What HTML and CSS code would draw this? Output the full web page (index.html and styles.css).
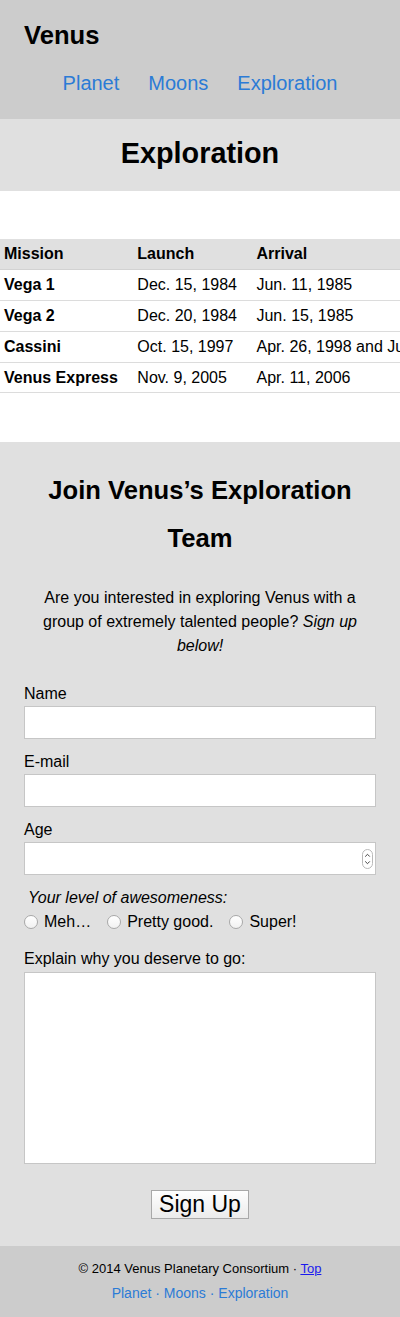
FILE: index.html
```html
<!DOCTYPE html>
<html lang="en">
<head>
<meta charset="utf-8">
<title>Venus — Exploration</title>
<link rel="stylesheet" href="styles.css">
</head>
<body>
<header class="site-header">
  <div class="brand">Venus</div>
  <nav class="main-nav">
    <a href="#">Planet</a>
    <a href="#">Moons</a>
    <a href="#">Exploration</a>
  </nav>
</header>
<main>
  <section class="page-title">
    <h1>Exploration</h1>
  </section>
  <div class="table-wrap">
    <table class="missions">
      <thead>
        <tr><th>Mission</th><th>Launch</th><th>Arrival</th></tr>
      </thead>
      <tbody>
        <tr><th>Vega 1</th><td>Dec. 15, 1984</td><td>Jun. 11, 1985</td></tr>
        <tr><th>Vega 2</th><td>Dec. 20, 1984</td><td>Jun. 15, 1985</td></tr>
        <tr><th>Cassini</th><td>Oct. 15, 1997</td><td>Apr. 26, 1998 and Jun. 24, 1999</td></tr>
        <tr><th>Venus Express</th><td>Nov. 9, 2005</td><td>Apr. 11, 2006</td></tr>
      </tbody>
    </table>
  </div>
  <section class="join">
    <h2>Join Venus’s Exploration Team</h2>
    <p class="intro">Are you interested in exploring Venus with a group of extremely talented people? <em>Sign up below!</em></p>
    <form class="join-form">
      <label class="field-label" for="name">Name</label>
      <input class="text-input" id="name" type="text">
      <label class="field-label" for="email">E-mail</label>
      <input class="text-input" id="email" type="text">
      <label class="field-label" for="age">Age</label>
      <div class="num-wrap">
        <input class="text-input" id="age" type="text" inputmode="numeric">
        <span class="spinner">
          <svg width="11" height="20" viewBox="0 0 11 20">
            <rect x="0.5" y="0.5" width="10" height="19" rx="5" fill="#fff" stroke="#b9b9b9"/>
            <path d="M3.2 7.6 L5.5 5.3 L7.8 7.6" fill="none" stroke="#444" stroke-width="1"/>
            <path d="M3.2 12.4 L5.5 14.7 L7.8 12.4" fill="none" stroke="#444" stroke-width="1"/>
          </svg>
        </span>
      </div>
      <fieldset class="awesome">
        <legend>Your level of awesomeness:</legend>
        <div class="radios">
          <label class="radio"><input type="radio" name="level"><span>Meh…</span></label>
          <label class="radio"><input type="radio" name="level"><span>Pretty good.</span></label>
          <label class="radio"><input type="radio" name="level"><span>Super!</span></label>
        </div>
      </fieldset>
      <label class="field-label" for="why">Explain why you deserve to go:</label>
      <textarea class="text-area" id="why"></textarea>
      <div class="actions">
        <button type="button" class="submit">Sign Up</button>
      </div>
    </form>
  </section>
</main>
<footer class="site-footer">
  <p class="copy">© 2014 Venus Planetary Consortium · <a class="top-link" href="#">Top</a></p>
  <p class="foot-nav"><a href="#">Planet</a> · <a href="#">Moons</a> · <a href="#">Exploration</a></p>
</footer>
</body>
</html>
```

FILE: styles.css
```css
* {
  box-sizing: border-box;
}

html, body {
  margin: 0;
  padding: 0;
}

body {
  font-family: "Liberation Sans", Arial, Helvetica, sans-serif;
  font-size: 16px;
  color: #000;
  background: #fff;
}

a {
  color: #2b7bd6;
  text-decoration: none;
}

/* Header */
.site-header {
  background: #cccccc;
  padding: 19px 24px 21px;
}

.brand {
  font-size: 25.6px;
  font-weight: bold;
  line-height: 32px;
}

.main-nav {
  margin-top: 17px;
  display: flex;
  justify-content: center;
  gap: 29px;
  font-size: 20px;
  line-height: 30px;
}

/* Page title */
.page-title {
  background: #e0e0e0;
  padding: 16px 0 20px;
  text-align: center;
}

.page-title h1 {
  margin: 0;
  font-size: 28.8px;
  line-height: 36px;
}

/* Table */
.table-wrap {
  margin: 48px 0 49px;
  overflow: hidden;
  width: 100%;
}

.missions {
  border-collapse: collapse;
  white-space: nowrap;
  min-width: 100%;
}

.missions th,
.missions td {
  height: 30.8px;
  padding: 0 15.5px 0 4px;
  text-align: left;
  vertical-align: middle;
  border-bottom: 1px solid #dcdcdc;
  line-height: 20px;
}

.missions thead th {
  background: #e0e0e0;
  border-bottom-color: #d2d2d2;
}

.missions td {
  font-weight: normal;
}

/* Join section */
.join {
  background: #e0e0e0;
  padding: 24px 24px 27px;
}

.join h2 {
  margin: 0;
  text-align: center;
  font-size: 25.6px;
  line-height: 48px;
}

.intro {
  margin: 24px 0;
  text-align: center;
  line-height: 24px;
}

.join-form {
  display: flex;
  flex-direction: column;
}

.field-label {
  display: block;
  line-height: 24px;
}

.text-input {
  display: block;
  width: 100%;
  height: 33px;
  margin: 0 0 11px;
  border: 1px solid #c6c6c6;
  background: #fff;
  font: inherit;
  padding: 0 6px;
}

.num-wrap {
  position: relative;
}

.spinner {
  position: absolute;
  right: 3px;
  top: 7px;
  width: 11px;
  height: 20px;
  display: block;
}

.spinner svg {
  display: block;
}

.awesome {
  border: 0;
  margin: 0 0 13px;
  padding: 0;
  min-width: 0;
}

.awesome legend {
  padding: 0 0 0 4px;
  font-style: italic;
  line-height: 24px;
}

.radios {
  display: flex;
  gap: 16px;
  line-height: 24px;
}

.radio {
  display: flex;
  align-items: center;
  gap: 6px;
}

.radio input {
  appearance: none;
  -webkit-appearance: none;
  width: 14px;
  height: 14px;
  margin: 0;
  border: 1px solid #a8a8a8;
  border-radius: 50%;
  background: linear-gradient(#ffffff, #f1f1f1);
  box-shadow: inset 0 1px 0 rgba(255,255,255,0.8);
}

.text-area {
  display: block;
  width: 100%;
  height: 192px;
  margin-top: 1px;
  border: 1px solid #c6c6c6;
  background: #fff;
  font: inherit;
  resize: none;
}

.actions {
  display: flex;
  justify-content: center;
  margin-top: 26px;
}

.submit {
  font-family: "Liberation Sans", Arial, sans-serif;
  font-size: 23px;
  height: 29px;
  line-height: 27px;
  padding: 0 7px;
  border: 1px solid #a9a9a9;
  background: linear-gradient(#ffffff, #ebebeb);
  color: #000;
  border-radius: 0;
}

/* Footer */
.site-footer {
  background: #cccccc;
  padding: 12px 0 11px;
  text-align: center;
}

.site-footer p {
  margin: 0;
}

.copy {
  font-size: 13px;
  line-height: 22px;
}

.top-link {
  color: #1a1aee;
  text-decoration: underline;
}

.foot-nav {
  font-size: 14px;
  line-height: 26px;
  color: #2b7bd6;
}
```
